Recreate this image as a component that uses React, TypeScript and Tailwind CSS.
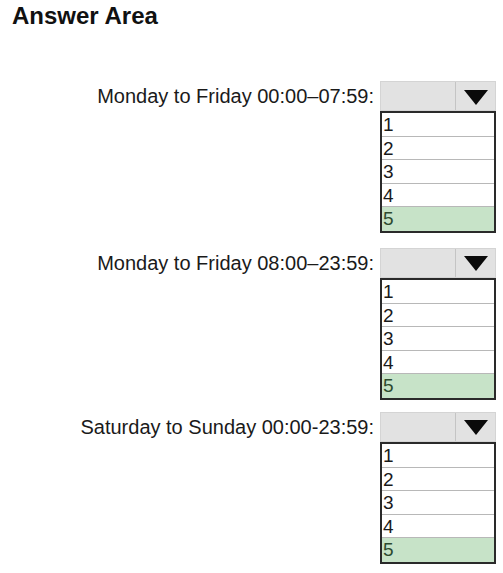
import React from "react";

const groups = [
  { label: "Monday to Friday 00:00–07:59:", mt: "mt-[51px]" },
  { label: "Monday to Friday 08:00–23:59:", mt: "mt-[15px]" },
  { label: "Saturday to Sunday 00:00-23:59:", mt: "mt-[12px]" },
];

function Dropdown() {
  return (
    <div className="w-[116px] flex flex-col">
      <div className="h-[30px] flex bg-[#e2e2e2] border border-[#d4d4d4]">
        <div className="w-[75px] border-r border-[#c4c4c4]" />
        <div className="flex-1 flex items-center justify-center pt-[2px]">
          <svg width="24" height="15" viewBox="0 0 24 15">
            <polygon points="0,0 24,0 12,15" fill="#0a0a0a" />
          </svg>
        </div>
      </div>
      <div className="border-2 border-[#2a2a2a] flex flex-col">
        {[1, 2, 3, 4, 5].map((n) => (
          <div
            key={n}
            className={
              n === 5
                ? "h-[23.6px] bg-[#c7e3c8] text-[#2e4a2e] text-[19px] leading-[24px] pl-[1px]"
                : "h-[23.6px] bg-white text-[#1a1a1a] text-[19px] leading-[24px] pl-[1px] border-b border-[#b8b8b8]"
            }
          >
            {n}
          </div>
        ))}
      </div>
    </div>
  );
}

export default function App() {
  return (
    <div
      className="w-[503px] h-[573px] bg-white pt-[2px]"
      style={{ fontFamily: '"Liberation Sans", Arial, sans-serif' }}
    >
      <div className="pl-[12px] text-[24px] font-bold text-[#111] leading-[28px]">
        Answer Area
      </div>
      {groups.map((g, i) => (
        <div key={i} className={`flex ${g.mt}`}>
          <div className="w-[380px] pr-[6px] flex justify-end h-[30px] items-center text-[20px] text-[#1a1a1a]">
            {g.label}
          </div>
          <Dropdown />
        </div>
      ))}
    </div>
  );
}
